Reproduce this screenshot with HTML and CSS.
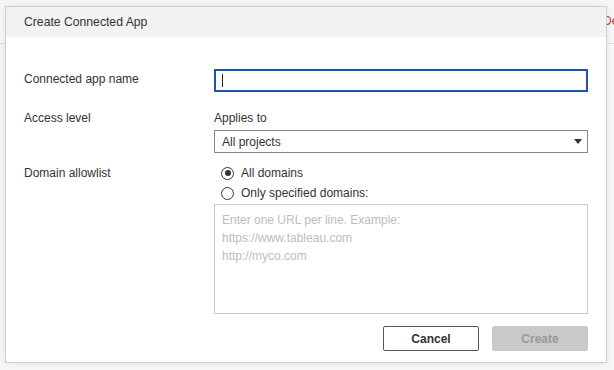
FILE: index.html
```html
<!DOCTYPE html>
<html lang="en">
<head>
    <meta charset="UTF-8">
    <meta name="viewport" content="width=device-width, initial-scale=1.0">
    <title>Create Connected App</title>
    <link rel="stylesheet" href="styles.css">
</head>
<body>
    <div class="page">
        <div class="page-bar">
            <span class="page-action">Delete</span>
        </div>
    </div>

    <div class="dialog" role="dialog" aria-label="Create Connected App">
        <div class="dialog-header">Create Connected App</div>
        <div class="dialog-body">
            <div class="row row-name">
                <label class="row-label" for="app-name">Connected app name</label>
                <div class="row-field">
                    <div class="text-input" id="app-name"><span class="caret"></span></div>
                </div>
            </div>
            <div class="row row-access">
                <div class="row-label">Access level</div>
                <div class="row-field">
                    <div class="field-caption">Applies to</div>
                    <div class="select">
                        <span>All projects</span>
                        <span class="select-arrow"></span>
                    </div>
                </div>
            </div>
            <div class="row row-domain">
                <div class="row-label">Domain allowlist</div>
                <div class="row-field">
                    <div class="radio checked"><span class="radio-dot"></span>All domains</div>
                    <div class="radio"><span class="radio-dot"></span>Only specified domains:</div>
                    <div class="textarea">
                        <div>Enter one URL per line. Example:</div>
                        <div>https://www.tableau.com</div>
                        <div>http://myco.com</div>
                    </div>
                </div>
            </div>
            <div class="actions">
                <button class="btn btn-cancel">Cancel</button>
                <button class="btn btn-create" disabled>Create</button>
            </div>
        </div>
    </div>
</body>
</html>
```

FILE: styles.css
```css
body {
    margin: 0;
    background-color: #f7f7f7;
    font-family: "Liberation Sans", Arial, sans-serif;
    font-size: 12px;
    color: #333;
}
.page {
    height: 370px;
    overflow: hidden;
}
.page-bar {
    height: 43px;
    border-bottom: 1px solid #dcdcdc;
    padding-left: 603px;
    white-space: nowrap;
    overflow: hidden;
}
.page-action {
    display: inline-block;
    margin-top: 14px;
    color: #c8392e;
    font-size: 12px;
}
.dialog {
    position: absolute;
    left: 5px;
    top: 6px;
    width: 600px;
    background: white;
    border: 1px solid #d0d0d0;
    box-shadow: 0 0 8px rgba(0, 0, 0, 0.08);
}
.dialog-header {
    height: 30px;
    line-height: 30px;
    padding-left: 18px;
    background-color: #f2f2f2;
    font-size: 12.2px;
    color: #333;
}
.dialog-body {
    padding: 32px 18px 11px 18px;
}
.row {
    display: grid;
    grid-template-columns: 190px 1fr;
}
.row-label {
    line-height: 16px;
    color: #333;
}
.row-name .row-label {
    padding-top: 2px;
}
.text-input {
    box-sizing: border-box;
    height: 23px;
    border: 2px solid #1f55a4;
    padding: 3px 6px;
}
.caret {
    display: block;
    width: 1px;
    height: 13px;
    background: #222;
}
.row-access {
    margin-top: 18px;
}
.field-caption {
    line-height: 16px;
    margin-bottom: 4px;
}
.select {
    box-sizing: border-box;
    height: 23px;
    border: 1px solid #888;
    display: flex;
    align-items: center;
    justify-content: space-between;
    padding: 0 5px 0 7px;
}
.select-arrow {
    width: 0;
    height: 0;
    border-left: 4px solid transparent;
    border-right: 4px solid transparent;
    border-top: 5px solid #333;
}
.row-domain {
    margin-top: 10px;
}
.row-domain .row-label {
    line-height: 20px;
}
.radio {
    display: flex;
    align-items: center;
    height: 20px;
    padding-left: 7px;
}
.radio-dot {
    box-sizing: border-box;
    width: 13px;
    height: 13px;
    border: 1px solid #333;
    border-radius: 50%;
    margin-right: 7px;
    display: flex;
    align-items: center;
    justify-content: center;
}
.radio.checked .radio-dot::after {
    content: "";
    width: 6px;
    height: 6px;
    border-radius: 50%;
    background: #333;
}
.textarea {
    box-sizing: border-box;
    height: 110px;
    margin-top: 1px;
    border: 1px solid #ccc;
    padding: 6px 7px;
    line-height: 18px;
    color: #bdbdbd;
}
.actions {
    display: flex;
    justify-content: flex-end;
    gap: 13px;
    margin-top: 12px;
}
.btn {
    width: 96px;
    height: 25px;
    font-family: "Liberation Sans", Arial, sans-serif;
    font-size: 12px;
    font-weight: bold;
    border-radius: 2px;
    padding: 0;
}
.btn-cancel {
    background: white;
    border: 1px solid #555;
    color: #333;
}
.btn-create {
    background: #c9c9c9;
    border: 1px solid #c9c9c9;
    color: #9a9a9a;
}
```
